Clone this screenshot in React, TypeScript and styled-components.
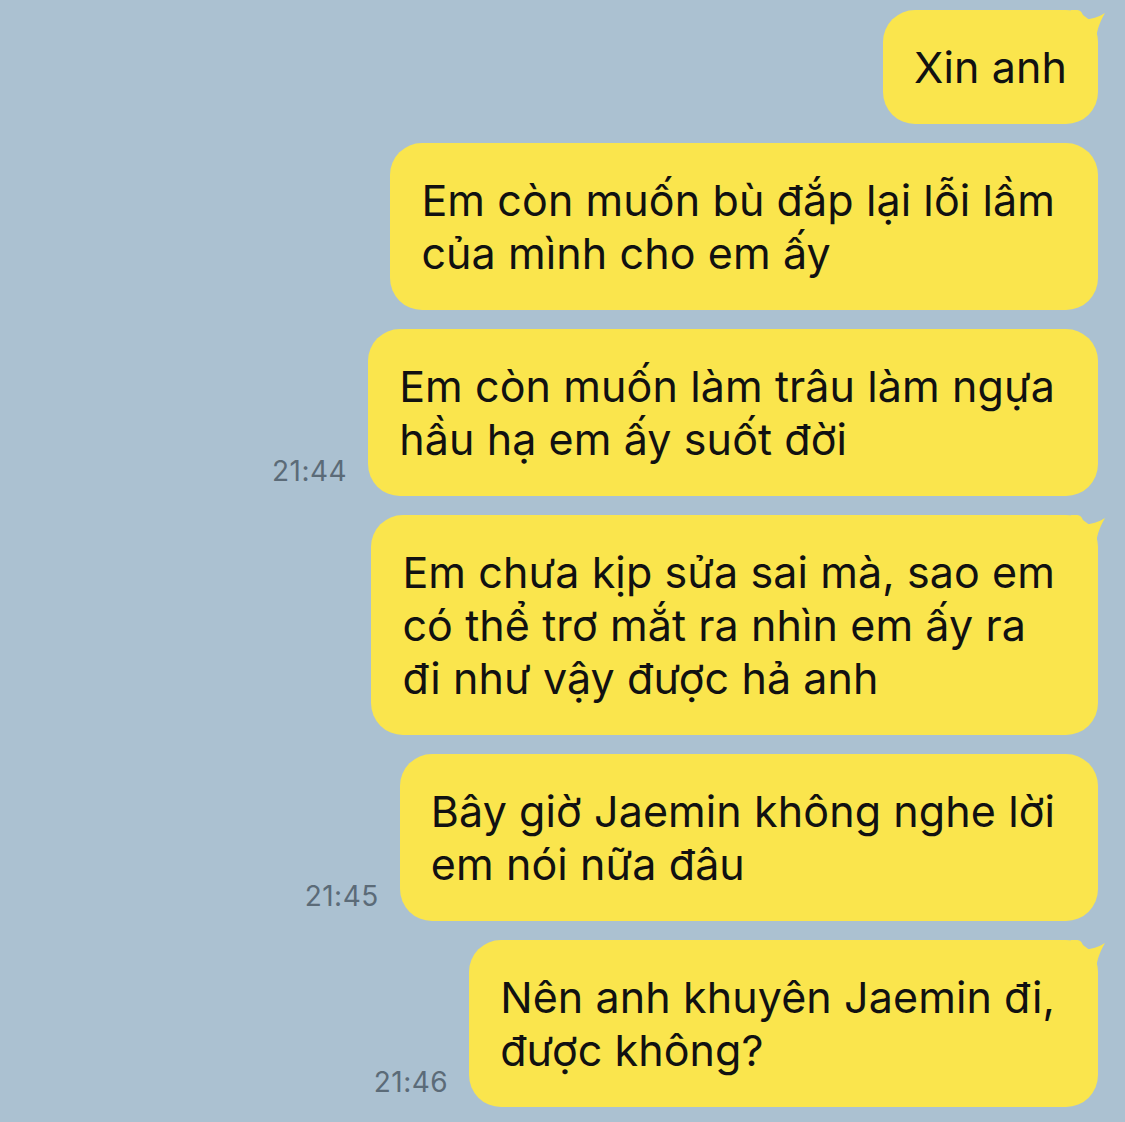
import styled, { createGlobalStyle } from 'styled-components';

interface Message {
  id: number;
  lines: string[];
  time?: string;
  tail?: boolean;
}

const MESSAGES: Message[] = [
  { id: 1, lines: ['Xin anh'], tail: true },
  { id: 2, lines: ['Em còn muốn bù đắp lại lỗi lầm', 'của mình cho em ấy'] },
  { id: 3, lines: ['Em còn muốn làm trâu làm ngựa', 'hầu hạ em ấy suốt đời'], time: '21:44' },
  {
    id: 4,
    lines: ['Em chưa kịp sửa sai mà, sao em', 'có thể trơ mắt ra nhìn em ấy ra', 'đi như vậy được hả anh'],
    tail: true,
  },
  { id: 5, lines: ['Bây giờ Jaemin không nghe lời', 'em nói nữa đâu'], time: '21:45' },
  { id: 6, lines: ['Nên anh khuyên Jaemin đi,', 'được không?'], time: '21:46', tail: true },
];

const BUBBLE = '#fae54d';

function Tail() {
  return (
    <TailShape viewBox="0 0 36 40" width={36} height={40}>
      <path d="M0 0 H6 C10 0 12.5 4 13 10 C20 9 28 7 34 3 C30 10 26 18 25 30 V40 H0 Z" fill={BUBBLE} />
    </TailShape>
  );
}

export default function App() {
  return (
    <>
      <GlobalStyle />
      <Chat>
        {MESSAGES.map((m) => (
          <Row key={m.id}>
            {m.time && <Time>{m.time}</Time>}
            <Bubble $multi={m.lines.length > 1}>
              {m.tail && <Tail />}
              {m.lines.map((line) => (
                <Line key={line}>{line}</Line>
              ))}
            </Bubble>
          </Row>
        ))}
      </Chat>
    </>
  );
}

const GlobalStyle = createGlobalStyle`
  html, body {
    margin: 0;
    padding: 0;
    background: #abc1d1;
  }

  body {
    font-family: Inter, "Noto Sans", sans-serif;
    -webkit-font-smoothing: antialiased;
  }
`;

const Chat = styled.div`
  display: flex;
  flex-direction: column;
  align-items: flex-end;
  gap: 19px;
  padding: 10px 27px 15px 0;
  min-height: 1122px;
  box-sizing: border-box;
`;

const Row = styled.div`
  display: flex;
  align-items: flex-end;
  gap: 21px;
`;

const Time = styled.div`
  font-size: 28px;
  color: #5b6b78;
  line-height: 1;
  margin-bottom: 11px;
  letter-spacing: 0.5px;
`;

const Bubble = styled.div<{ $multi: boolean }>`
  position: relative;
  background: ${BUBBLE};
  border-radius: 32px;
  padding: ${(p) => (p.$multi ? '30.5px 43px 30.5px 31px' : '30.5px 31px')};
  color: #111;
  font-size: 43px;
  letter-spacing: 0.1px;
  line-height: 53px;
`;

const Line = styled.div`
  white-space: nowrap;
`;

const TailShape = styled.svg`
  position: absolute;
  top: 0;
  right: -9px;
  display: block;
`;
